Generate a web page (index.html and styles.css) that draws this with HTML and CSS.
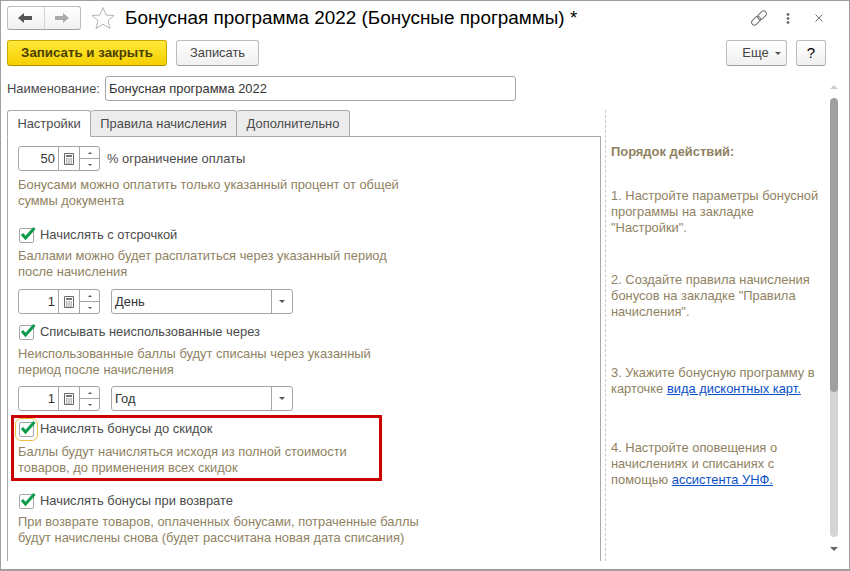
FILE: index.html
```html
<!DOCTYPE html>
<html lang="ru">
<head>
    <meta charset="UTF-8">
    <title>Бонусная программа 2022</title>
    <link rel="stylesheet" href="styles.css">
</head>
<body>
    <div class="window">
        <div class="titleRow">
            <div class="navGroup">
                <div class="navButton">
                    <svg width="16" height="12" viewBox="0 0 16 12"><path d="M0 6 L6 1 V4 H14 V8 H6 V11 Z" fill="#555"/></svg>
                </div>
                <div class="navButton">
                    <svg width="16" height="12" viewBox="0 0 16 12"><path d="M15 6 L9 1 V4 H1 V8 H9 V11 Z" fill="#aaa"/></svg>
                </div>
            </div>
            <svg class="star" width="24" height="24" viewBox="0 0 24 24"><path d="M12 1.5 L15 9 L23 9.5 L17 14.7 L19 22.5 L12 18.2 L5 22.5 L7 14.7 L1 9.5 L9 9 Z" fill="#fff" stroke="#b5b5b5"/></svg>
            <div class="title">Бонусная программа 2022 (Бонусные программы) *</div>
            <div class="windowIcons">
                <svg class="linkIcon" width="16" height="16" viewBox="0 0 16 16" fill="none" stroke="#707070"><rect x="0" y="8" width="10" height="5.5" rx="2.75" transform="rotate(-45 5 10.75)"/><rect x="6" y="2.5" width="10" height="5.5" rx="2.75" transform="rotate(-45 11 5.25)"/></svg>
                <svg class="menuIcon" width="4" height="11" viewBox="0 0 4 11" fill="#707070"><circle cx="2" cy="1.5" r="1.4"/><circle cx="2" cy="5.5" r="1.4"/><circle cx="2" cy="9.5" r="1.4"/></svg>
                <svg class="closeIcon" width="8" height="8" viewBox="0 0 8 8" stroke="#707070"><path d="M.5 .5 L7.5 7.5 M7.5 .5 L.5 7.5"/></svg>
            </div>
        </div>

        <div class="toolbar">
            <div class="button primary">Записать и закрыть</div>
            <div class="button saveButton">Записать</div>
            <div class="spacer"></div>
            <div class="button moreButton">Еще <span class="arrow"></span></div>
            <div class="button helpButton">?</div>
        </div>

        <div class="nameRow">
            <div class="label">Наименование:</div>
            <div class="nameInput">Бонусная программа 2022</div>
        </div>

        <div class="main">
            <div class="leftPane">
                <div class="tabs">
                    <div class="tab active">Настройки</div>
                    <div class="tab">Правила начисления</div>
                    <div class="tab">Дополнительно</div>
                </div>
                <div class="panel">
                    <div class="fieldRow firstRow">
                        <div class="spinner">
                            <div class="spinValue">50</div>
                            <div class="calc">
                                <svg width="10" height="12" viewBox="0 0 10 12"><path d="M.5.5h9v11h-9z" fill="#fff" stroke="#666"/><path d="M2 2h6v2H2z" fill="#777"/><path d="M2 5.5h1.5v1H2zM4.3 5.5h1.5v1H4.3zM6.5 5.5H8v1H6.5zM2 7.5h1.5v1H2zM4.3 7.5h1.5v1H4.3zM6.5 7.5H8v1H6.5zM2 9.5h1.5v1H2zM4.3 9.5h1.5v1H4.3zM6.5 9.5H8v1H6.5z" fill="#777"/></svg>
                            </div>
                            <div class="spin"><div class="spinUp"></div><div class="spinDown"></div></div>
                        </div>
                        <div class="label">% ограничение оплаты</div>
                    </div>
                    <div class="desc descFirst">Бонусами можно оплатить только указанный процент от общей<br>суммы документа</div>

                    <div class="check checkDelay">
                        <div class="box"><svg width="17" height="16" viewBox="0 0 17 16"><path d="M3 9 L6.5 13 L15.5 3" fill="none" stroke="#0b9a4b" stroke-width="3"/></svg></div>
                        <div class="label">Начислять с отсрочкой</div>
                    </div>
                    <div class="desc descDelay">Баллами можно будет расплатиться через указанный период<br>после начисления</div>

                    <div class="fieldRow periodRow">
                        <div class="spinner">
                            <div class="spinValue">1</div>
                            <div class="calc">
                                <svg width="10" height="12" viewBox="0 0 10 12"><path d="M.5.5h9v11h-9z" fill="#fff" stroke="#666"/><path d="M2 2h6v2H2z" fill="#777"/><path d="M2 5.5h1.5v1H2zM4.3 5.5h1.5v1H4.3zM6.5 5.5H8v1H6.5zM2 7.5h1.5v1H2zM4.3 7.5h1.5v1H4.3zM6.5 7.5H8v1H6.5zM2 9.5h1.5v1H2zM4.3 9.5h1.5v1H4.3zM6.5 9.5H8v1H6.5z" fill="#777"/></svg>
                            </div>
                            <div class="spin"><div class="spinUp"></div><div class="spinDown"></div></div>
                        </div>
                        <div class="select">
                            <div class="selectValue">День</div>
                            <div class="selectButton"><span class="arrow"></span></div>
                        </div>
                    </div>

                    <div class="check checkWriteoff">
                        <div class="box"><svg width="17" height="16" viewBox="0 0 17 16"><path d="M3 9 L6.5 13 L15.5 3" fill="none" stroke="#0b9a4b" stroke-width="3"/></svg></div>
                        <div class="label">Списывать неиспользованные через</div>
                    </div>
                    <div class="desc descWriteoff">Неиспользованные баллы будут списаны через указанный<br>период после начисления</div>

                    <div class="fieldRow periodRow yearRow">
                        <div class="spinner">
                            <div class="spinValue">1</div>
                            <div class="calc">
                                <svg width="10" height="12" viewBox="0 0 10 12"><path d="M.5.5h9v11h-9z" fill="#fff" stroke="#666"/><path d="M2 2h6v2H2z" fill="#777"/><path d="M2 5.5h1.5v1H2zM4.3 5.5h1.5v1H4.3zM6.5 5.5H8v1H6.5zM2 7.5h1.5v1H2zM4.3 7.5h1.5v1H4.3zM6.5 7.5H8v1H6.5zM2 9.5h1.5v1H2zM4.3 9.5h1.5v1H4.3zM6.5 9.5H8v1H6.5z" fill="#777"/></svg>
                            </div>
                            <div class="spin"><div class="spinUp"></div><div class="spinDown"></div></div>
                        </div>
                        <div class="select">
                            <div class="selectValue">Год</div>
                            <div class="selectButton"><span class="arrow"></span></div>
                        </div>
                    </div>

                    <div class="check checkBefore">
                        <div class="box focused"><svg width="17" height="16" viewBox="0 0 17 16"><path d="M3 9 L6.5 13 L15.5 3" fill="none" stroke="#0b9a4b" stroke-width="3"/></svg></div>
                        <div class="label">Начислять бонусы до скидок</div>
                    </div>
                    <div class="desc descBefore">Баллы будут начисляться исходя из полной стоимости<br>товаров, до применения всех скидок</div>

                    <div class="check checkReturn">
                        <div class="box"><svg width="17" height="16" viewBox="0 0 17 16"><path d="M3 9 L6.5 13 L15.5 3" fill="none" stroke="#0b9a4b" stroke-width="3"/></svg></div>
                        <div class="label">Начислять бонусы при возврате</div>
                    </div>
                    <div class="desc descReturn">При возврате товаров, оплаченных бонусами, потраченные баллы<br>будут начислены снова (будет рассчитана новая дата списания)</div>
                </div>
            </div>

            <div class="sidePane">
                <div class="sideTitle">Порядок действий:</div>
                <div class="desc sideStep stepOne">1. Настройте параметры бонусной<br>программы на закладке<br>"Настройки".</div>
                <div class="desc sideStep stepTwo">2. Создайте правила начисления<br>бонусов на закладке "Правила<br>начисления".</div>
                <div class="desc sideStep stepThree">3. Укажите бонусную программу в<br>карточке <a class="link" href="#">вида дисконтных карт.</a></div>
                <div class="desc sideStep stepFour">4. Настройте оповещения о<br>начислениях и списаниях с<br>помощью <a class="link" href="#">ассистента УНФ.</a></div>
            </div>

            <div class="scrollbar">
                <div class="scrollUp"></div>
                <div class="scrollTrack"><div class="scrollThumb"></div></div>
                <div class="scrollDown"></div>
            </div>
        </div>

        <div class="highlight"></div>
    </div>
</body>
</html>
```

FILE: styles.css
```css
* {
    margin: 0;
    padding: 0;
    box-sizing: border-box;
}
body {
    background-color: #fff;
    color: #4b4b4b;
    font-family: "Liberation Sans", Arial, sans-serif;
    font-size: 12.9px;
    line-height: 16px;
    overflow: hidden;
}
.window {
    position: relative;
    width: 850px;
    height: 571px;
    border: 1px solid #a0a0a0;
    border-bottom-width: 2px;
    overflow: hidden;
}
.titleRow {
    display: flex;
    align-items: center;
    height: 24px;
    margin-top: 5px;
    padding-left: 6px;
}
.navGroup {
    display: flex;
    width: 74px;
    height: 24px;
    border: 1px solid #bdbdbd;
    border-bottom-color: #a0a0a0;
    border-radius: 3px;
    background: linear-gradient(#fff, #f1f1f1);
}
.navButton {
    flex: 1;
    display: flex;
    justify-content: center;
    align-items: center;
}
.navButton + .navButton {
    border-left: 1px solid #d5d5d5;
}
.star {
    margin-left: 10px;
}
.title {
    margin-left: 10px;
    color: #000;
    font-size: 18.9px;
    line-height: 24px;
}
.windowIcons {
    margin-left: auto;
    display: flex;
    align-items: center;
    margin-right: 26px;
}
.menuIcon {
    margin-left: 19px;
}
.closeIcon {
    margin-left: 25px;
}
.toolbar {
    display: flex;
    height: 26px;
    margin-top: 10px;
    padding: 0 23px 0 6px;
}
.spacer {
    flex: 1;
}
.button {
    display: flex;
    justify-content: center;
    align-items: center;
    height: 26px;
    border: 1px solid #bdbdbd;
    border-bottom-color: #a0a0a0;
    border-radius: 3px;
    background: linear-gradient(#fff, #f0f0f0);
    color: #444;
}
.primary {
    width: 160px;
    border-color: #c9a800;
    border-bottom-color: #a89000;
    background: linear-gradient(#ffe93a, #f5cf00);
    color: #4a3f00;
    font-size: 13.3px;
    font-weight: bold;
}
.saveButton {
    width: 83px;
    margin-left: 9px;
}
.moreButton {
    width: 61px;
    padding-left: 10px;
    font-size: 13px;
}
.moreButton .arrow {
    margin-left: 6px;
}
.helpButton {
    width: 30px;
    margin-left: 9px;
    color: #000;
    font-size: 15px;
}
.arrow {
    display: inline-block;
    width: 0;
    height: 0;
    border-left: 3px solid transparent;
    border-right: 3px solid transparent;
    border-top: 3px solid #555;
}
.nameRow {
    display: flex;
    align-items: center;
    height: 25px;
    margin-top: 10px;
    padding-left: 6px;
}
.nameInput {
    width: 411px;
    height: 25px;
    margin-left: 5px;
    padding: 4px 3px;
    border: 1px solid #a5a5a5;
    border-radius: 3px;
    color: #333;
}
.main {
    display: flex;
    height: 451px;
    margin-top: 9px;
}
.leftPane {
    width: 600px;
    padding-left: 6px;
}
.tabs {
    display: flex;
    height: 27px;
}
.tab {
    display: flex;
    align-items: center;
    justify-content: center;
    width: 146px;
    background-color: #ececec;
    border: 1px solid #a9a9a9;
    border-left-width: 0;
    border-radius: 3px 3px 0 0;
    color: #4b4b4b;
}
.tab:last-child {
    width: 113px;
}
.tab.active {
    width: 84px;
    background-color: #fff;
    border-left-width: 1px;
    border-bottom-color: #fff;
}
.panel {
    height: 425px;
    margin-top: -1px;
    padding-left: 10px;
    border-left: 1px solid #a9a9a9;
    border-right: 1px solid #a9a9a9;
    border-top: 1px solid #a9a9a9;
}
.fieldRow {
    display: flex;
    align-items: center;
}
.firstRow {
    margin-top: 9px;
}
.periodRow {
    margin-top: 9px;
}
.yearRow {
    margin-top: 8px;
}
.spinner {
    display: flex;
    width: 82px;
    height: 25px;
    border: 1px solid #a5a5a5;
    border-radius: 3px;
}
.spinValue {
    width: 40px;
    padding: 4px 3px 0 0;
    border-right: 1px solid #a5a5a5;
    color: #333;
    font-size: 13px;
    text-align: right;
}
.calc {
    display: flex;
    justify-content: center;
    align-items: center;
    width: 21px;
    border-right: 1px solid #a5a5a5;
}
.spin {
    flex: 1;
    display: flex;
    flex-direction: column;
}
.spinUp, .spinDown {
    flex: 1;
    display: flex;
    justify-content: center;
    align-items: center;
}
.spinUp {
    border-bottom: 1px solid #a5a5a5;
}
.spinUp::after, .spinDown::after {
    content: "";
    border-left: 2px solid transparent;
    border-right: 2px solid transparent;
}
.spinUp::after {
    border-bottom: 2px solid #555;
}
.spinDown::after {
    border-top: 2px solid #555;
}
.fieldRow > .label {
    margin-left: 7px;
}
.desc {
    color: #8f8262;
}
.descFirst {
    margin-top: 6px;
}
.descDelay, .descReturn {
    margin-top: 4px;
}
.descWriteoff {
    margin-top: 5px;
}
.descBefore {
    margin-top: 6px;
}
.check {
    display: flex;
    align-items: center;
    height: 18px;
    padding-left: 1px;
}
.checkDelay {
    margin-top: 17px;
}
.checkWriteoff {
    margin-top: 9px;
}
.checkBefore {
    margin-top: 9px;
}
.checkReturn {
    margin-top: 16px;
}
.box {
    position: relative;
    width: 15px;
    height: 15px;
    margin-right: 6px;
    border: 1px solid #a5a5a5;
    border-radius: 2px;
}
.box svg {
    position: absolute;
    left: -1px;
    top: -4px;
}
.box.focused {
    outline: 1px solid #f0c040;
    outline-offset: 3px;
}
.sidePane {
    width: 225px;
    margin-left: 4px;
    padding: 34px 0 0 5px;
    border-left: 1px dashed #c8c8c8;
}
.sideTitle {
    color: #8f8262;
    font-weight: bold;
}
.stepOne {
    margin-top: 28px;
}
.stepTwo {
    margin-top: 36px;
}
.stepThree {
    margin-top: 45px;
}
.stepFour {
    margin-top: 43px;
}
.link {
    color: #0b50c8;
    text-decoration: underline;
}
.scrollbar {
    display: flex;
    flex-direction: column;
    align-items: center;
    width: 8px;
    height: 441px;
}
.scrollUp, .scrollDown {
    flex: none;
    width: 0;
    height: 0;
    border-left: 4px solid transparent;
    border-right: 4px solid transparent;
}
.scrollUp {
    margin-top: -25px;
    border-bottom: 4px solid #ccc;
}
.scrollDown {
    margin-top: 10px;
    border-top: 4px solid #666;
}
.scrollTrack {
    flex: 1;
    width: 8px;
    margin-top: 9px;
    border-radius: 4px;
    overflow: hidden;
    background-color: #d5d5d5;
}
.scrollThumb {
    width: 8px;
    height: 294px;
    border-radius: 4px;
    background-color: #a0a0a0;
}
.select {
    display: flex;
    width: 182px;
    height: 25px;
    margin-left: 11px;
    border: 1px solid #a5a5a5;
    border-radius: 3px;
}
.selectValue {
    flex: 1;
    padding: 4px 3px;
    color: #333;
}
.selectButton {
    display: flex;
    justify-content: center;
    align-items: center;
    width: 21px;
    border-left: 1px solid #a5a5a5;
}
/* red frame drawn over the form */
.highlight {
    position: absolute;
    left: 10px;
    top: 414px;
    width: 371px;
    height: 66px;
    border: 3px solid #cc0000;
}
```
